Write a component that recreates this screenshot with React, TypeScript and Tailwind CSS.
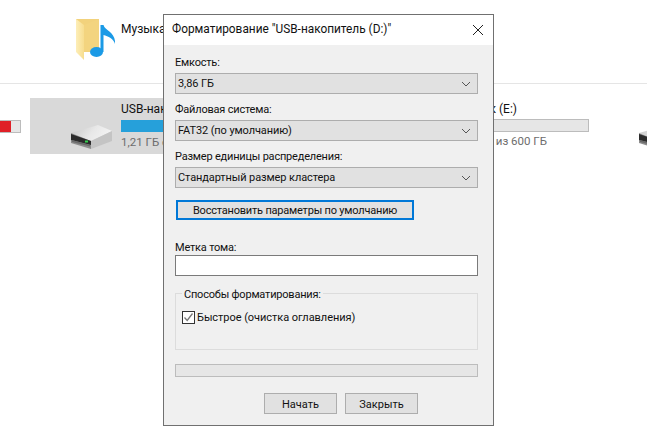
const font = { fontFamily: 'Roboto, "Noto Sans", sans-serif' };

function Drive({ className = "" }: { className?: string }) {
  return (
    <svg viewBox="0 0 42 25" className={className}>
      <defs>
        <linearGradient id="driveTop" x1="0" y1="0" x2="1" y2="0.3">
          <stop offset="0" stopColor="#c4c4c4" />
          <stop offset="0.6" stopColor="#e8e8e8" />
          <stop offset="1" stopColor="#f2f2f2" />
        </linearGradient>
      </defs>
      <path d="M0 8 L27 0 L41 6 L20 16 Z" fill="url(#driveTop)" />
      <path d="M20 16 L41 6 L41 16 L20 24 Z" fill="#c4c4c4" />
      <path d="M0 8 L20 16 L20 24 L0 18 Z" fill="#8c8c8c" />
      <path d="M0 9 L20 16 L20 20 L0 15 Z" fill="#2b2b2b" />
      <path d="M1 15 L19 20 L19 21.5 L1 17 Z" fill="#6a6a6a" />
      <rect x="14" y="15.5" width="3" height="2" fill="#35d04f" />
    </svg>
  );
}

function Combo({ label }: { label: string }) {
  return (
    <div className="flex h-[21px] items-center justify-between border border-[#adadad] bg-[#e1e1e1] pl-[2px] pr-[6px]">
      <span className="text-[11px] leading-none tracking-[-0.1px] text-[#111]">{label}</span>
      <svg viewBox="0 0 10 6" className="h-[6px] w-[10px]">
        <path d="M1 1 L5 5 L9 1" fill="none" stroke="#555" strokeWidth="1" />
      </svg>
    </div>
  );
}

function Label({ text, h }: { text: string; h: string }) {
  return <div className={`flex items-center text-[11px] leading-none tracking-[-0.2px] text-[#111] ${h}`}>{text}</div>;
}

export default function App() {
  return (
    <div className="relative h-[445px] w-[647px] overflow-hidden bg-white" style={font}>
      <div className="flex h-[84px] items-start border-b border-[#e5e5e5] pl-[75px] pt-[18px]">
        <svg viewBox="0 0 40 44" className="h-[44px] w-[40px]">
          <defs>
            <linearGradient id="folderFlap" x1="0" y1="0" x2="1" y2="0">
              <stop offset="0" stopColor="#fdeeb8" />
              <stop offset="1" stopColor="#f7dd8f" />
            </linearGradient>
          </defs>
          <path d="M1 1 L24 1 L24 34 L1 34 Z" fill="#f2d27c" />
          <path d="M1 1 L9 7 L9 42 L1 34 Z" fill="url(#folderFlap)" />
          <path d="M9 7 L24 1 L24 33 L9 33 Z" fill="#f3d47f" />
          <ellipse cx="21.5" cy="34" rx="6.5" ry="5" fill="#1b9ae6" />
          <path d="M25.5 34 L25.5 7 L28.5 7 C30 13 41 14 40 26 C39 21 33 18 28.5 17 L28.5 34 Z" fill="#1b9ae6" />
        </svg>
        <span className="ml-[6px] mt-[5px] text-[12px] leading-none text-[#111]">Музыка</span>
      </div>
      <div className="mt-[14px] flex h-[56px] items-center">
        <div className="h-[13px] w-[21px] border border-l-0 border-[#bcbcbc] bg-[#e6e6e6]">
          <div className="h-full w-[11px] bg-[#e02027]" />
        </div>
        <div className="ml-[9px] flex h-[56px] w-[150px] shrink-0 bg-[#d9d9d9]">
          <Drive className="ml-[41px] mt-[27px] h-[25px] w-[42px] shrink-0" />
          <div className="ml-[8px] mt-[4px] w-[200px] shrink-0">
            <div className="h-[15px] text-[12px] leading-[15px] text-[#111]">USB-накопитель (D:)</div>
            <div className="mt-[3px] h-[12px] w-[200px] bg-[#26a0da]" />
            <div className="mt-[3px] text-[11.5px] leading-[15px] text-[#6d6d6d]">1,21 ГБ свободно из 3,86 ГБ</div>
          </div>
        </div>
        <div className="mb-[2px] ml-auto mr-[58px] flex flex-col items-end">
          <div className="mr-[72px] text-[12px] leading-[15px] text-[#111]">к (E:)</div>
          <div className="mt-[2px] h-[13px] w-[120px] border border-[#bcbcbc] bg-[#e6e6e6]" />
          <div className="mr-[42px] mt-[2px] text-[11.5px] leading-[15px] text-[#6d6d6d]">о из 600 ГБ</div>
        </div>
      </div>
      <Drive className="absolute left-[639px] top-[125px] h-[25px] w-[42px]" />

      <div className="absolute left-[163px] top-[14px] h-[412px] w-[331px] border border-[#707070] bg-[#f0f0f0]">
        <div className="flex h-[30px] items-center justify-between bg-white pl-[8px] pr-[10px]">
          <span className="text-[11.85px] leading-none text-[#111]">Форматирование "USB-накопитель (D:)"</span>
          <svg viewBox="0 0 10 10" className="h-[10px] w-[10px]">
            <path d="M0 0 L10 10 M10 0 L0 10" stroke="#222" strokeWidth="1" />
          </svg>
        </div>
        <div className="pl-[11px] pr-[15px]">
          <Label text="Емкость:" h="h-[28px] pt-[7px]" />
          <Combo label="3,86 ГБ" />
          <Label text="Файловая система:" h="h-[26px] pt-[5px]" />
          <Combo label="FAT32 (по умолчанию)" />
          <Label text="Размер единицы распределения:" h="h-[26px] pt-[5px]" />
          <Combo label="Стандартный размер кластера" />
          <div className="ml-px mt-[12px] flex h-[20px] w-[238px] items-center justify-center border-2 border-[#0078d7] bg-[#e1e1e1] pt-px text-[11px] leading-none tracking-[-0.2px] text-[#111]">
            Восстановить параметры по умолчанию
          </div>
          <Label text="Метка тома:" h="h-[35px] pt-[20px]" />
          <div className="h-[21px] border border-[#7a7a7a] bg-white" />
          <div className="relative mt-[17px] h-[57px] border border-[#dcdcdc] px-[6px] pt-[17px]">
            <span className="absolute -top-[6px] left-[6px] bg-[#f0f0f0] px-[2px] text-[11px] leading-[14px] tracking-[-0.2px] text-[#111]">
              Способы форматирования:
            </span>
            <div className="flex items-center">
              <div className="flex h-[13px] w-[13px] items-center justify-center border border-[#333] bg-white">
                <svg viewBox="0 0 11 11" className="h-[11px] w-[11px]">
                  <path d="M1.5 5.5 L4.2 8.5 L9.5 1.5" fill="none" stroke="#777" strokeWidth="1.3" />
                </svg>
              </div>
              <span className="-mt-px ml-[2px] text-[11px] leading-none tracking-[-0.05px] text-[#111]">Быстрое (очистка оглавления)</span>
            </div>
          </div>
          <div className="mt-[14px] h-[13px] border border-[#bcbcbc] bg-[#e6e6e6]" />
          <div className="ml-[89px] mt-[16px] flex gap-[8px]">
            <div className="flex h-[21px] w-[73px] items-center justify-center border border-[#adadad] bg-[#e1e1e1] pt-px text-[11px] leading-none text-[#111]">Начать</div>
            <div className="flex h-[21px] w-[73px] items-center justify-center border border-[#adadad] bg-[#e1e1e1] pt-px text-[11px] leading-none text-[#111]">Закрыть</div>
          </div>
        </div>
      </div>
    </div>
  );
}
